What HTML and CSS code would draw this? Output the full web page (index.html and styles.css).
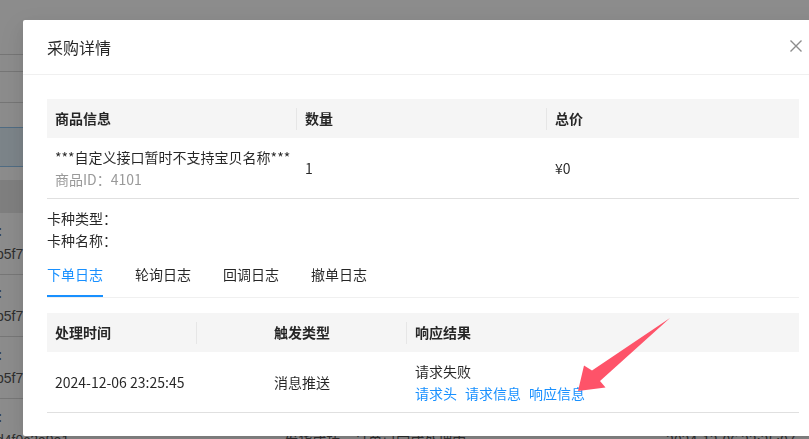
FILE: index.html
```html
<!DOCTYPE html>
<html lang="zh-CN">
<head>
  <meta charset="UTF-8">
  <meta name="viewport" content="width=device-width, initial-scale=1.0">
  <title>采购详情</title>
  <link rel="stylesheet" href="styles.css">
</head>
<body>

<!-- page behind the dialog -->
<div class="page">
  <div class="pg-head"></div>
  <div class="pg-bar"></div>
  <div class="pg-bar tall"></div>
  <div class="pg-gap"></div>
  <div class="pg-selected"></div>
  <div class="pg-gap small"></div>
  <div class="pg-thead"></div>
  <div class="pg-row"><span class="pg-key">订单编号:</span><span class="pg-val">b5f7e1c0a3</span></div>
  <div class="pg-row"><span class="pg-key">订单编号:</span><span class="pg-val">b5f7e1c0a3</span></div>
  <div class="pg-row"><span class="pg-key">订单编号:</span><span class="pg-val">b5f7e1c0a3</span></div>
  <div class="pg-row">
    <span class="pg-key">订单编号:</span>
    <div class="pg-line">
      <span class="pg-val">d4f0c2a9e1</span>
      <span class="pg-cell mid">发货成功，订单已完成处理中</span>
      <span class="pg-cell">2024-12-06 23:25:07</span>
    </div>
  </div>
</div>

<div class="mask"></div>

<div class="modal">
  <div class="modal-header">
    <div class="modal-title">采购详情</div>
    <span class="modal-close">
      <svg width="12" height="12" viewBox="0 0 12 12"><path d="M0.5 0.5 L11.5 11.5 M11.5 0.5 L0.5 11.5" stroke="#8c8c8c" stroke-width="1.4" fill="none"/></svg>
    </span>
  </div>
  <div class="modal-body">
    <table class="grid goods">
      <colgroup><col class="c250"><col class="c250"><col></colgroup>
      <thead>
        <tr><th>商品信息</th><th>数量</th><th>总价</th></tr>
      </thead>
      <tbody>
        <tr>
          <td>
            <div>***自定义接口暂时不支持宝贝名称***</div>
            <div class="muted">商品ID：4101</div>
          </td>
          <td>1</td>
          <td>¥0</td>
        </tr>
      </tbody>
    </table>

    <div class="card-info">
      <div>卡种类型：</div>
      <div>卡种名称：</div>
    </div>

    <div class="tabs">
      <span class="tab active">下单日志</span>
      <span class="tab">轮询日志</span>
      <span class="tab">回调日志</span>
      <span class="tab">撤单日志</span>
    </div>

    <table class="grid log">
      <colgroup><col class="c150"><col class="c210"><col></colgroup>
      <thead>
        <tr><th>处理时间</th><th class="center">触发类型</th><th>响应结果</th></tr>
      </thead>
      <tbody>
        <tr>
          <td>2024-12-06 23:25:45</td>
          <td class="center">消息推送</td>
          <td>
            <div>请求失败</div>
            <div class="links"><a href="#">请求头</a><a href="#">请求信息</a><a href="#">响应信息</a></div>
          </td>
        </tr>
      </tbody>
    </table>
  </div>
</div>

<!-- annotation arrow -->
<svg class="arrow" width="809" height="439" viewBox="0 0 809 439">
  <path d="M670 318 L600 381 L605.5 387.5 L578 391 L584 365.5 L592 370.5 Z" fill="#fe5369"/>
</svg>

</body>
</html>
```

FILE: styles.css
```css
body {
  margin: 0;
  height: 439px;
  overflow: hidden;
  font-family: "Noto Sans CJK SC", sans-serif;
  font-size: 14px;
  color: rgba(0, 0, 0, 0.85);
  background-color: #fff;
}

/* page underneath */
.page {
  width: 809px;
}
.pg-head {
  height: 54px;
  border-bottom: 1px solid #d6d6d6;
}
.pg-bar {
  height: 16px;
  border-bottom: 1px solid #d6d6d6;
}
.pg-bar.tall {
  height: 30px;
}
.pg-gap {
  height: 24px;
}
.pg-gap.small {
  height: 13px;
}
.pg-selected {
  height: 38px;
  background-color: #e2f0fa;
  border-top: 1px solid #91c5ee;
  border-bottom: 1px solid #91c5ee;
}
.pg-thead {
  height: 33px;
  background-color: #e8e8e8;
}
.pg-row {
  height: 56px;
  padding-top: 5px;
  border-bottom: 1px solid #d9d9d9;
  line-height: 24px;
  color: #555;
}
.pg-key {
  display: block;
  margin-left: -58px;
}
.pg-val {
  display: block;
  margin-left: -4px;
  font-family: "Liberation Sans", sans-serif;
}
.pg-line {
  display: flex;
}
.pg-cell {
  margin-left: 200px;
}
.pg-cell.mid {
  margin-left: 215px;
}

.mask {
  position: fixed;
  inset: 0;
  background-color: rgba(0, 0, 0, 0.45);
}

/* dialog */
.modal {
  position: fixed;
  top: 20px;
  left: 23px;
  width: 800px;
  height: 416px;
  background-color: #fff;
  border-radius: 2px;
  box-shadow: 0 3px 6px -4px rgba(0, 0, 0, 0.12), 0 6px 16px 0 rgba(0, 0, 0, 0.08), 0 9px 28px 8px rgba(0, 0, 0, 0.05);
}
.modal-header {
  display: flex;
  align-items: center;
  padding: 16px 21px 16px 24px;
  border-bottom: 1px solid #f0f0f0;
}
.modal-title {
  flex: 1;
  font-size: 16px;
  line-height: 22px;
}
.modal-close {
  display: flex;
  margin-top: -2px;
}
.modal-body {
  padding: 24px;
}

/* tables */
.grid {
  width: 100%;
  border-collapse: collapse;
  table-layout: fixed;
  line-height: 22px;
}
.c250 {
  width: 250px;
}
.c150 {
  width: 150px;
}
.c210 {
  width: 210px;
}
.grid th {
  padding: 8px 8px 9px;
  text-align: left;
  font-weight: 700;
  background: linear-gradient(#e6e6e6, #e6e6e6) right center / 1px 22px no-repeat, #f5f5f5;
}
.grid th:last-child {
  background: #f5f5f5;
}
.grid td {
  padding: 8px;
  border-bottom: 1px solid #e0e0e0;
  white-space: nowrap;
}
.grid .center {
  text-align: center;
}
.muted {
  color: #999;
}

.card-info {
  padding-top: 8px;
  line-height: 22px;
}

.tabs {
  display: flex;
  margin-bottom: 15px;
  border-bottom: 1px solid #f0f0f0;
  line-height: 22px;
}
.tab {
  padding: 12px 0;
  margin-right: 32px;
}
.tab.active {
  color: #1890ff;
  box-shadow: inset 0 -2px 0 #1890ff;
}

.links a {
  margin-right: 8px;
  color: #1890ff;
  text-decoration: none;
}

.arrow {
  position: fixed;
  top: 0;
  left: 0;
  pointer-events: none;
}
```
